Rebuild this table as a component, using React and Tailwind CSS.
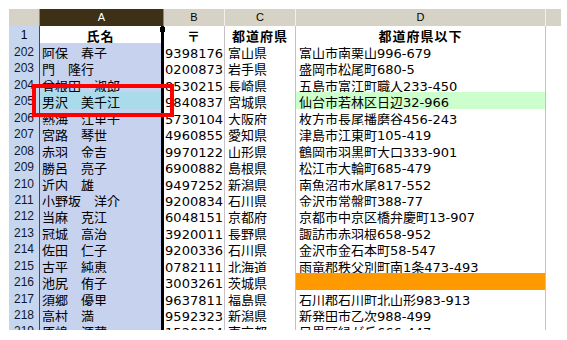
const rows = [
  ["202", "阿保　春子", "9398176", "富山県", "富山市南栗山996-679"],
  ["203", "門　隆行", "0200873", "岩手県", "盛岡市松尾町680-5"],
  ["204", "曾根田　淑郎", "8530215", "長崎県", "五島市富江町職人233-450"],
  ["205", "男沢　美千江", "9840837", "宮城県", "仙台市若林区日辺32-966"],
  ["206", "熱海　江里子", "5730104", "大阪府", "枚方市長尾播磨谷456-243"],
  ["207", "宮路　琴世", "4960855", "愛知県", "津島市江東町105-419"],
  ["208", "赤羽　金吉", "9970122", "山形県", "鶴岡市羽黒町大口333-901"],
  ["209", "勝呂　亮子", "6900882", "島根県", "松江市大輪町685-479"],
  ["210", "近内　雄", "9497252", "新潟県", "南魚沼市水尾817-552"],
  ["211", "小野坂　洋介", "9200834", "石川県", "金沢市常盤町388-77"],
  ["212", "当麻　克江", "6048151", "京都府", "京都市中京区橋弁慶町13-907"],
  ["213", "冠城　高治", "3920011", "長野県", "諏訪市赤羽根658-952"],
  ["214", "佐田　仁子", "9200336", "石川県", "金沢市金石本町58-547"],
  ["215", "古平　純恵", "0782111", "北海道", "雨竜郡秩父別町南1条473-493"],
  ["216", "池尻　侑子", "3003261", "茨城県", ""],
  ["217", "須郷　優里", "9637811", "福島県", "石川郡石川町北山形983-913"],
  ["218", "高村　満", "9592323", "新潟県", "新発田市乙次988-499"],
  ["219", "原嶋　源蔵", "1520034", "東京都", "目黒区緑が丘666-447"],
];

const font = { fontFamily: '"DejaVu Sans", "Noto Sans CJK JP", sans-serif' };

export default function App() {
  return (
    <div className="w-[567px] h-[340px] bg-white pl-[9px] pt-[9px]">
      <div
        className="relative w-[552px] h-[321px] overflow-hidden text-[13px] text-black"
        style={font}
      >
        {/* column headers */}
        <div className="grid grid-cols-[31px_124px_61px_71px_250px_15px] h-[17px] text-[11px] font-['Liberation_Sans',sans-serif]">
          <div className="bg-[#d6d3c6] border-r border-r-[#8a8a8a] border-b border-b-[#8a8a8a]" />
          <div className="bg-[#3e2f17] text-white flex items-center justify-center border-r border-r-[#8a8a8a] border-b border-b-[#8a8a8a]">A</div>
          <div className="bg-[#d6d3c6] flex items-center justify-center border-r border-r-[#f2f0e8] border-b border-b-[#8a8a8a]">B</div>
          <div className="bg-[#d6d3c6] flex items-center justify-center border-r border-r-[#f2f0e8] border-b border-b-[#8a8a8a]">C</div>
          <div className="bg-[#d6d3c6] flex items-center justify-center border-r border-r-[#f2f0e8] border-b border-b-[#8a8a8a]">D</div>
          <div className="bg-[#d6d3c6] border-b border-b-[#8a8a8a]" />
        </div>

        {/* title row */}
        <div className="grid grid-cols-[31px_124px_61px_71px_250px_15px] h-[17px] font-bold tracking-[1px]">
          <div className="bg-[#c6d6ef] border-r border-r-[#2a4a9a] border-b border-b-[#5a80d0] flex items-center justify-center font-normal tracking-normal text-[12px] font-['Liberation_Sans',sans-serif]">1</div>
          <div className="bg-white border-r-[3px] border-r-black border-b border-b-black flex items-end justify-center leading-[15px]">氏名</div>
          <div className="bg-white border-r border-r-[#c8c0c8] border-b border-b-black flex items-end justify-center leading-[15px]">〒</div>
          <div className="bg-white border-r border-r-[#c8c0c8] border-b border-b-black flex items-end justify-center leading-[15px]">都道府県</div>
          <div className="bg-white border-r border-r-[#c8c0c8] border-b border-b-black flex items-end justify-center leading-[15px]">都道府県以下</div>
          <div className="bg-white border-b border-b-[#c8c0c8]" />
        </div>

        {rows.map(([n, name, zip, pref, addr]) => (
          <div key={n} className="grid grid-cols-[31px_124px_61px_71px_250px_15px] h-[16.45px]">
            <div className="bg-[#c6d6ef] border-r border-r-[#2a4a9a] border-b border-b-[#5a80d0] flex items-center justify-center text-[12px] text-[#101830] font-['Liberation_Sans',sans-serif]">
              {n}
            </div>
            <div
              className={
                n === "205"
                  ? "bg-[#a9dbea] border-r-[3px] border-r-black border-b border-b-[#b0bcd8] flex items-end pl-[2px] leading-[15px] whitespace-nowrap overflow-hidden"
                  : "bg-[#c6d2ee] border-r-[3px] border-r-black border-b border-b-[#b0bcd8] flex items-end pl-[2px] leading-[15px] whitespace-nowrap overflow-hidden"
              }
            >
              {name}
            </div>
            <div className="bg-white border-r border-r-[#c8c0c8] border-b border-b-[#c0c0c0] flex items-end justify-end pr-[1px] leading-[15px] whitespace-nowrap overflow-hidden">
              {zip}
            </div>
            <div className="bg-white border-r border-r-[#c8c0c8] border-b border-b-[#c0c0c0] flex items-end pl-[3px] leading-[15px] whitespace-nowrap overflow-hidden">
              {pref}
            </div>
            <div
              className={
                n === "205"
                  ? "bg-[#ccffcc] border-r border-r-[#c8c0c8] border-b border-b-[#c0c0c0] flex items-end pl-[3px] leading-[15px] whitespace-nowrap overflow-hidden"
                  : n === "216"
                  ? "bg-[#ff9900] border-r border-r-[#c8c0c8] border-b border-b-[#c0c0c0] flex items-end pl-[3px] leading-[15px] whitespace-nowrap overflow-hidden"
                  : "bg-white border-r border-r-[#c8c0c8] border-b border-b-[#c0c0c0] flex items-end pl-[3px] leading-[15px] whitespace-nowrap overflow-hidden"
              }
            >
              {addr}
            </div>
            <div className="bg-white border-b border-b-[#c0c0c0]" />
          </div>
        ))}

        {/* fill handle */}
        <div className="absolute left-[151px] top-[18px] w-[5px] h-[5px] bg-black" />
        {/* red highlight box */}
        <div className="absolute left-[23px] top-[75px] w-[142px] h-[33px] border-4 border-[#ff0000]" />
      </div>
    </div>
  );
}
